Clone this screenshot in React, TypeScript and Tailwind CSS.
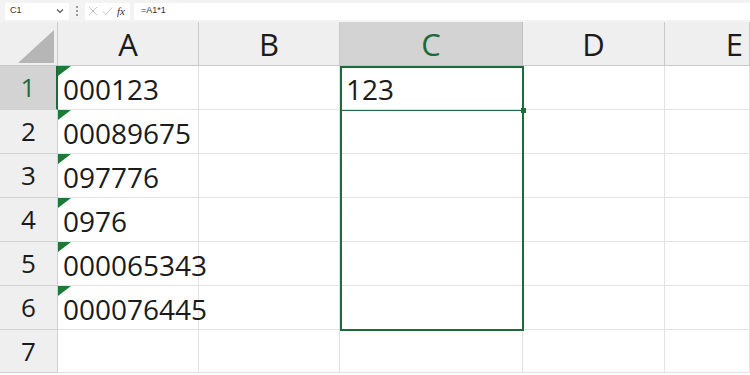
import React from 'react';

const cols = ['A', 'B', 'C', 'D', 'E'];
const colA = ['000123', '00089675', '097776', '0976', '000065343', '000076445', ''];

const Flag = () => (
  <svg className="absolute left-0 top-0" width="13" height="10" viewBox="0 0 13 10">
    <polygon points="0,0 13,0 0,10" fill="#1d7a35" />
  </svg>
);

const App: React.FC = () => {
  return (
    <div className="w-[750px] h-[375px] bg-white overflow-hidden font-['Open_Sans',sans-serif] text-[#1b1b1b]">
      {/* formula bar */}
      <div className="h-[22px] bg-[#f3f3f3] flex items-center pl-[5px] gap-[4px]">
        <div className="w-[64px] h-[17px] bg-white rounded-[2px] flex items-center justify-between px-[5px] text-[9px] font-['Liberation_Sans',sans-serif] text-[#333]">
          <span>C1</span>
          <svg width="8" height="6" viewBox="0 0 8 6">
            <path d="M1 1.5 L4 4.5 L7 1.5" stroke="#555" strokeWidth="1.2" fill="none" />
          </svg>
        </div>
        <div className="flex flex-col gap-[2px] px-[3px]">
          <span className="w-[2px] h-[2px] bg-[#9a9a9a]" />
          <span className="w-[2px] h-[2px] bg-[#9a9a9a]" />
          <span className="w-[2px] h-[2px] bg-[#9a9a9a]" />
        </div>
        <div className="w-[45px] h-[17px] bg-white rounded-[2px] flex items-center gap-[4px] px-[3px]">
          <svg width="10" height="10" viewBox="0 0 10 10">
            <path d="M1 1 L9 9 M9 1 L1 9" stroke="#c4c4c4" strokeWidth="1" />
          </svg>
          <svg width="11" height="10" viewBox="0 0 11 10">
            <path d="M1 5.5 L4 8.5 L10 1.5" stroke="#c4c4c4" strokeWidth="1" fill="none" />
          </svg>
          <span className="font-['Liberation_Serif',serif] italic text-[11px] leading-none text-[#333]">fx</span>
        </div>
        <div className="flex-1 h-[17px] bg-white rounded-l-[2px] flex items-center pl-[7px] text-[9px] font-['Liberation_Sans',sans-serif] text-[#333]">
          =A1*1
        </div>
      </div>

      {/* sheet */}
      <div className="relative grid grid-cols-[58px_141px_141px_183px_142px_85px] grid-rows-[44px_repeat(6,44px)_43px]">
        {/* corner */}
        <div className="bg-[#efefef] border-r border-b border-[#c8c8c8] relative overflow-hidden">
          <svg className="absolute right-[3px] bottom-[2px]" width="36" height="33" viewBox="0 0 36 33">
            <polygon points="36,0 36,33 0,33" fill="#b6b6b6" />
          </svg>
        </div>
        {cols.map((c) => (
          <div
            key={c}
            className={
              c === 'C'
                ? 'bg-[#d3d3d3] border-r border-b border-[#c0c0c0] flex items-center justify-center pt-[2px] text-[31px] text-[#1e6b3a]'
                : 'bg-[#efefef] border-r border-b border-[#c8c8c8] flex items-center justify-center pt-[2px] text-[31px] text-[#1b1b1b]'
            }
          >
            {c === 'E' ? <span className="ml-auto mr-[6px]">{c}</span> : c}
          </div>
        ))}

        {colA.map((v, i) => (
          <React.Fragment key={i}>
            <div
              className={
                i === 0
                  ? 'bg-[#d3d3d3] border-r-2 border-r-[#1e6b3a] border-b border-b-[#d0d0d0] flex items-center justify-center text-[26px] text-[#1e6b3a]'
                  : 'bg-[#efefef] border-r border-b border-[#d0d0d0] flex items-center justify-center text-[26px]'
              }
            >
              {i + 1}
            </div>
            <div className="relative border-r border-b border-[#e2e2e2] flex items-center pl-[5px] pt-[2px] text-[28px] whitespace-nowrap">
              {v && <Flag />}
              <span className="relative z-10">{v}</span>
            </div>
            <div className="border-r border-b border-[#e2e2e2]" />
            <div className="border-r border-b border-[#e2e2e2] flex items-center pl-[6px] pt-[2px] text-[28px]">
              {i === 0 ? '123' : ''}
            </div>
            <div className="border-r border-b border-[#e2e2e2]" />
            <div className="border-r border-b border-[#e2e2e2]" />
          </React.Fragment>
        ))}

        {/* selection C1:C6 */}
        <div className="absolute left-[340px] top-[44px] w-[184px] h-[265px] border-2 border-[#1e6b3a] pointer-events-none">
          <div className="h-[43px] border-b border-[#1e6b3a]" />
          <span className="absolute right-[-4px] top-[40px] w-[5px] h-[5px] bg-[#1e6b3a]" />
        </div>
      </div>
    </div>
  );
};

export default App;
